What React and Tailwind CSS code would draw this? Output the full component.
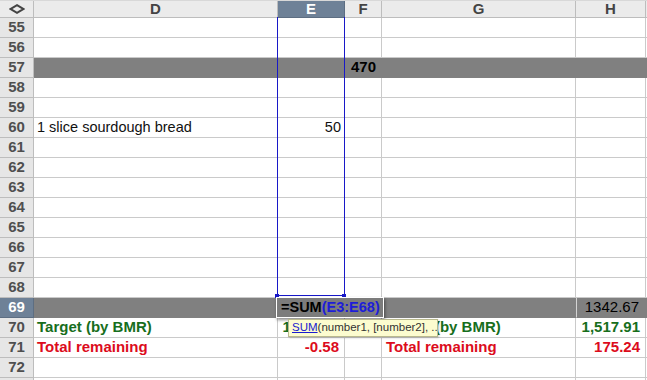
import React from "react";

const cols = [
  { key: "D", w: "w-[244px]" },
  { key: "E", w: "w-[67px]" },
  { key: "F", w: "w-[37px]" },
  { key: "G", w: "w-[194px]" },
  { key: "H", w: "w-[70px]" },
];

const green = "text-[#176e1c]";
const red = "text-[#dc0c1c]";

const rows = [
  { n: 55 },
  { n: 56 },
  { n: 57, gray: true, cells: { F: { text: "470", cls: "font-bold text-black pl-[6px] text-[15px]" } } },
  { n: 58 },
  { n: 59 },
  {
    n: 60,
    cells: {
      D: { text: "1 slice sourdough bread", cls: "pl-[3px] text-[#111]" },
      E: { text: "50", cls: "justify-end pr-[3px] text-[#111]" },
    },
  },
  { n: 61 },
  { n: 62 },
  { n: 63 },
  { n: 64 },
  { n: 65 },
  { n: 66 },
  { n: 67 },
  { n: 68 },
  {
    n: 69,
    gray: true,
    active: true,
    cells: { H: { text: "1342.67", cls: "justify-end pr-[6px] text-black text-[15px] border-l border-l-[#d4d4d4]" } },
  },
  {
    n: 70,
    cells: {
      D: { text: "Target (by BMR)", cls: `pl-[3px] font-bold text-[15px] ${green}` },
      E: { text: "1,517.91", cls: `justify-end pr-[3px] font-bold text-[15px] ${green}` },
      G: { text: "Target (by BMR)", cls: `pl-[4px] font-bold text-[15px] ${green}` },
      H: { text: "1,517.91", cls: `justify-end pr-[5px] font-bold text-[15px] ${green}` },
    },
  },
  {
    n: 71,
    cells: {
      D: { text: "Total remaining", cls: `pl-[3px] font-bold text-[15px] ${red}` },
      E: { text: "-0.58", cls: `justify-end pr-[5px] font-bold text-[15px] ${red}` },
      G: { text: "Total remaining", cls: `pl-[4px] font-bold text-[15px] ${red}` },
      H: { text: "175.24", cls: `justify-end pr-[5px] font-bold text-[15px] ${red}` },
    },
  },
  { n: 72 },
  { n: 73 },
];

const Row = ({ row }) => (
  <div className={`flex h-5 ${row.gray ? "bg-[#808080]" : "bg-white"}`}>
    <div
      className={`w-[34px] shrink-0 flex items-center justify-center border-r border-b text-[15px] font-bold ${
        row.active
          ? "bg-[#6e8197] text-white border-[#5d6e82]"
          : "bg-[#e6e6e6] text-[#4f4f4f] border-[#bdbdbd]"
      }`}
    >
      {row.n}
    </div>
    {cols.map((c) => {
      const cell = row.cells?.[c.key];
      return (
        <div
          key={c.key}
          className={`${c.w} shrink-0 flex items-center whitespace-nowrap overflow-visible border-r border-b text-[14.5px] ${
            row.gray ? "border-[#808080]" : "border-[#cacaca]"
          } ${cell?.cls ?? ""}`}
        >
          {cell?.text}
        </div>
      );
    })}
    <div className={`flex-1 border-b ${row.gray ? "border-[#808080]" : "border-[#cacaca]"}`} />
  </div>
);

export default function App() {
  return (
    <div
      className="relative w-[647px] h-[380px] overflow-hidden bg-white select-none"
      style={{ fontFamily: '"Liberation Sans", Arial, sans-serif' }}
    >
      {/* column header */}
      <div className="flex h-[18px] bg-[#ebebeb] border-t border-t-[#d8d8d8]">
        <div className="w-[34px] shrink-0 flex items-center justify-center border-r border-b border-[#bdbdbd]">
          <svg width="16" height="10" viewBox="0 0 16 10">
            <path d="M8 1.2 L14.3 5 L8 8.8 L1.7 5 Z" fill="none" stroke="#444" strokeWidth="2" strokeLinejoin="miter" />
          </svg>
        </div>
        {cols.map((c) => (
          <div
            key={c.key}
            className={`${c.w} shrink-0 flex items-center justify-center border-r border-b text-[15px] font-bold ${
              c.key === "E"
                ? "bg-[#6e8197] text-white border-[#5d6e82]"
                : "text-[#444] border-[#bdbdbd]"
            }`}
          >
            {c.key}
          </div>
        ))}
        <div className="flex-1 border-b border-[#bdbdbd]" />
      </div>

      {rows.map((r) => (
        <Row key={r.n} row={r} />
      ))}

      {/* selection outline E55:E68 */}
      <div className="absolute left-[277px] top-[17px] w-px h-[279px] bg-[#1818c8]" />
      <div className="absolute left-[344px] top-[17px] w-px h-[279px] bg-[#1818c8]" />
      <div className="absolute left-[277px] top-[295px] w-[68px] h-px bg-[#1818c8]" />
      <div className="absolute left-[275px] top-[294px] w-[4px] h-[4px] bg-[#1818c8]" />
      <div className="absolute left-[342px] top-[294px] w-[4px] h-[4px] bg-[#1818c8]" />

      {/* in-cell formula editor */}
      <div className="absolute left-[276px] top-[297px] w-[108px] h-[21px] bg-[#7c7c7c] border border-white shadow-[1px_2px_3px_rgba(0,0,0,0.45)] flex items-center pl-[4px] text-[14.5px] font-bold whitespace-nowrap">
        <span className="text-black">=SUM</span>
        <span className="text-[#1d1dd8]">(E3:E68)</span>
      </div>

      {/* function tooltip */}
      <div className="absolute left-[288px] top-[319px] w-[150px] h-[18px] bg-[#fcfccf] border border-[#b9b98e] flex items-center pl-[3px] text-[11.5px] text-[#333] whitespace-nowrap overflow-hidden shadow-[1px_1px_2px_rgba(0,0,0,0.2)]">
        <span className="text-[#1a1ad0] underline">SUM</span>
        <span>(number1, [number2], ...)</span>
      </div>
    </div>
  );
}
